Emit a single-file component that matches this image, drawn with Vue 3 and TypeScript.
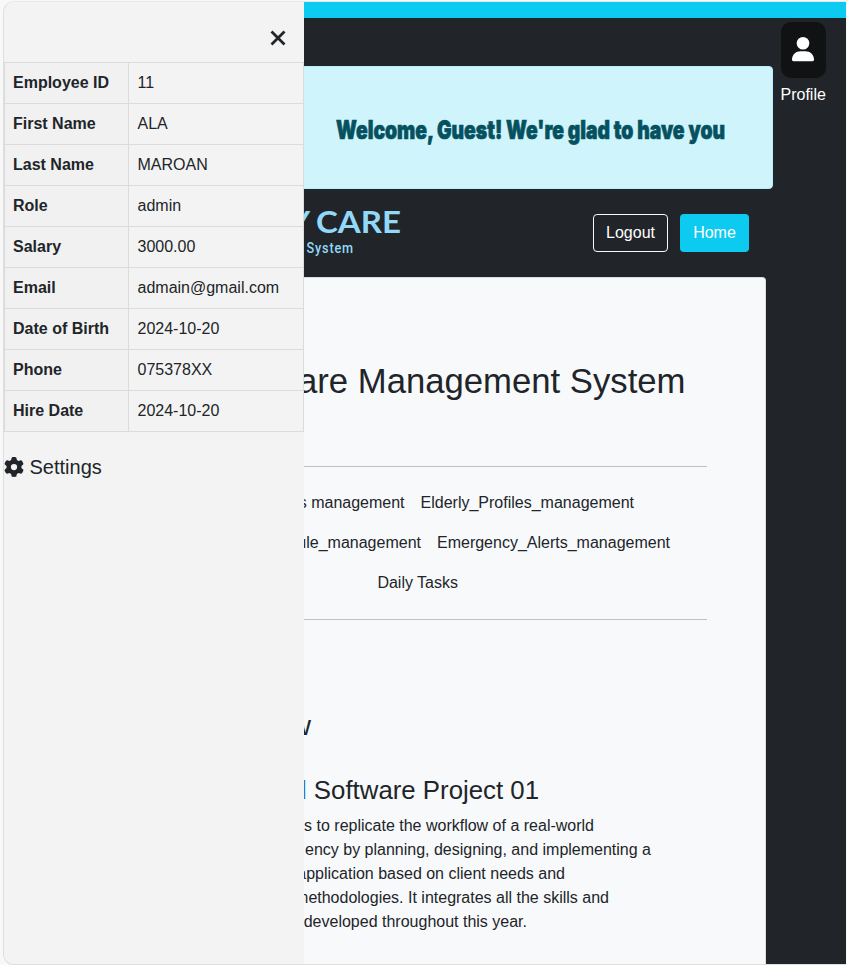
<script setup lang="ts">
interface Field {
  label: string
  value: string
}

const fields: Field[] = [
  { label: 'Employee ID', value: '11' },
  { label: 'First Name', value: 'ALA' },
  { label: 'Last Name', value: 'MAROAN' },
  { label: 'Role', value: 'admin' },
  { label: 'Salary', value: '3000.00' },
  { label: 'Email', value: 'admain@gmail.com' },
  { label: 'Date of Birth', value: '2024-10-20' },
  { label: 'Phone', value: '075378XX' },
  { label: 'Hire Date', value: '2024-10-20' },
]

const summary: string[] = [
  's to replicate the workflow of a real-world',
  'ency by planning, designing, and implementing a',
  'application based on client needs and',
  'methodologies. It integrates all the skills and',
  'developed throughout this year.',
]
</script>

<template>
  <div class="window">
    <div class="frame">
      <main class="page">
        <div class="strip"></div>
        <section class="top">
          <div class="banner">
            <svg class="welcome" width="400" height="40" viewBox="0 0 400 40">
              <text x="5" y="31" textLength="389" lengthAdjust="spacingAndGlyphs">Welcome, Guest! We're glad to have you</text>
            </svg>
          </div>
          <div class="profile">
            <div class="avatar">
              <svg width="22" height="25" viewBox="0 0 22 25">
                <circle cx="11" cy="6.3" r="6.3" />
                <path d="M0 22.6C0 17.5 4 14.2 8.600 14.200h4.800C18 14.200 22 17.500 22 22.600c0 1-.6 1.700-1.500 1.700h-19C.6 24.300 0 23.600 0 22.600z" />
              </svg>
            </div>
            <span>Profile</span>
          </div>
        </section>
        <nav class="nav">
          <svg class="logo" width="110" height="60" viewBox="0 0 110 60">
            <text class="brand" x="6" y="32" text-anchor="end">Y</text>
            <text class="brand" x="12" y="32" textLength="85" lengthAdjust="spacingAndGlyphs">CARE</text>
            <text class="tag" transform="translate(2.500 51.500) scale(.82 1)">System</text>
          </svg>
          <button class="btn outline">Logout</button>
          <button class="btn solid">Home</button>
        </nav>
        <article class="card">
          <h1>Care Management System</h1>
          <div class="links">
            <div class="row first"><a>Tasks management</a><a>Elderly_Profiles_management</a></div>
            <div class="row second"><a>Schedule_management</a><a>Emergency_Alerts_management</a></div>
            <div class="row third"><a>Daily Tasks</a></div>
          </div>
          <h2>Overview</h2>
          <h3><span class="accent">Final</span> Software Project 01</h3>
          <div class="summary">
            <div v-for="line in summary" :key="line" class="line">{{ line }}</div>
          </div>
        </article>
      </main>
      <aside class="drawer">
        <div class="close">
          <svg width="16" height="16" viewBox="0 0 16 16"><path d="M1.500 1.500l13 13M14.500 1.500l-13 13" /></svg>
        </div>
        <table>
          <tbody>
            <tr v-for="f in fields" :key="f.label">
              <th>{{ f.label }}</th>
              <td>{{ f.value }}</td>
            </tr>
          </tbody>
        </table>
        <div class="settings">
          <svg width="20" height="20" viewBox="0 0 512 512">
            <path d="M495.900 166.600c3.200 8.700 .5 18.400-6.400 24.600l-43.300 39.400c1.100 8.300 1.700 16.800 1.700 25.400s-.6 17.100-1.700 25.400l43.300 39.400c6.900 6.200 9.600 15.900 6.400 24.600c-4.400 11.900-9.700 23.300-15.800 34.300l-4.700 8.100c-6.600 11-14 21.400-22.100 31.200c-5.900 7.200-15.700 9.600-24.500 6.800l-55.700-17.700c-13.400 10.300-28.200 18.900-44 25.400l-12.500 57.100c-2 9.100-9 16.300-18.200 17.800c-13.800 2.300-28 3.500-42.500 3.500s-28.700-1.200-42.500-3.500c-9.200-1.500-16.200-8.700-18.200-17.800l-12.500-57.100c-15.800-6.500-30.600-15.100-44-25.400L83.100 425.900c-8.800 2.800-18.600 .3-24.500-6.800c-8.100-9.800-15.500-20.200-22.100-31.200l-4.700-8.100c-6.100-11-11.400-22.400-15.800-34.300c-3.200-8.700-.5-18.400 6.400-24.600l43.300-39.400C64.600 273.100 64 264.600 64 256s.6-17.100 1.700-25.400L22.400 191.200c-6.900-6.200-9.600-15.900-6.400-24.600c4.400-11.900 9.700-23.300 15.800-34.300l4.700-8.100c6.600-11 14-21.400 22.100-31.200c5.900-7.200 15.700-9.600 24.500-6.800l55.700 17.700c13.400-10.300 28.200-18.900 44-25.400l12.500-57.100c2-9.100 9-16.300 18.200-17.800C227.300 1.200 241.500 0 256 0s28.700 1.200 42.500 3.500c9.200 1.500 16.200 8.700 18.200 17.800l12.500 57.100c15.800 6.500 30.600 15.100 44 25.400l55.700-17.700c8.800-2.800 18.600-.3 24.500 6.800c8.100 9.800 15.500 20.200 22.100 31.200l4.700 8.100c6.100 11 11.400 22.400 15.800 34.300zM256 336a80 80 0 1 0 0-160 80 80 0 1 0 0 160z" />
          </svg>
          <span>Settings</span>
        </div>
      </aside>
    </div>
  </div>
</template>

<style>
body {
  background: #f8f8f8;
  overflow: hidden;
}
</style>

<style scoped>
* {
  box-sizing: border-box;
}
.window {
  width: 847px;
  height: 965px;
  padding: 1px 1px 0 3px;
  background: #f8f8f8;
  font: 16px/24px "Liberation Sans", Arial, sans-serif;
  color: #212529;
}
.frame {
  position: relative;
  height: 964px;
  border: 1px solid #dedede;
  border-top-color: #e8e8e8;
  border-right: 0;
  border-radius: 11px 0 0 11px;
  overflow: hidden;
}
.page {
  height: 962px;
  margin-left: 20px;
  background: #212529;
  overflow: hidden;
}
.strip {
  height: 16px;
  background: #0dcaf0;
}
.top {
  display: flex;
  height: 171px;
  padding: 4px 0 0 264px;
  gap: 8px;
}
.banner {
  width: 485px;
  height: 123px;
  margin-top: 44px;
  display: flex;
  align-items: center;
  justify-content: center;
  background: #cff4fc;
  border: 1px solid #b6effb;
  border-radius: 4px;
}
.welcome {
  overflow: visible;
}
.welcome text {
  font: 900 25.5px Inter, "Open Sans", sans-serif;
  fill: #055160;
  stroke: #055160;
  stroke-width: 0.7px;
}
.profile {
  display: flex;
  flex-direction: column;
  gap: 5px;
  color: #fff;
}
.profile span {
  margin-left: -0.5px;
}
.avatar {
  width: 45px;
  height: 56px;
  display: flex;
  align-items: center;
  justify-content: center;
  padding: 0 1px 2px 0;
  border-radius: 10px;
  background: #111213;
}
.avatar svg {
  fill: #fff;
}
.nav {
  height: 88px;
  display: flex;
  align-items: center;
  padding-left: 280px;
}
.logo {
  margin: -4px 179px 0 0;
  overflow: visible;
}
.brand {
  font: 700 31px Lato, sans-serif;
  fill: #92d8f8;
}
.tag {
  font: 500 15.5px Roboto, sans-serif;
  letter-spacing: 1px;
  fill: #92d8f8;
}
.btn {
  height: 38px;
  padding: 0;
  border-radius: 4px;
  color: #fff;
  font: inherit;
}
.outline {
  width: 75px;
  margin-right: 12px;
  border: 1px solid #f8f9fa;
  background: transparent;
}
.solid {
  width: 69px;
  border: 0;
  background: #0dcaf0;
}
.card {
  width: 697px;
  height: 687px;
  margin-left: 45px;
  padding: 75px 58px 0 58px;
  background: #f8f9fb;
  border: 1px solid #dcdddf;
  border-bottom: 0;
  border-radius: 4px 4px 0 0;
}
h1,
h2,
h3 {
  margin: 0;
  font-weight: 400;
  text-align: right;
  white-space: nowrap;
}
h1 {
  height: 113px;
  padding-right: 21.5px;
  font-size: 34.7px;
  line-height: 56px;
}
.links {
  height: 154px;
  padding-top: 24px;
  border-top: 1px solid #c0c2c5;
  border-bottom: 1px solid #c0c2c5;
}
.row {
  height: 40px;
  display: flex;
  justify-content: flex-end;
  gap: 16px;
}
.first {
  padding-right: 73px;
}
.second {
  padding-right: 37px;
}
.third {
  padding-right: 249px;
}
h2 {
  margin-top: 88px;
  padding-right: 396px;
  font-size: 28px;
  line-height: 36px;
}
h3 {
  margin-top: 30px;
  padding-right: 168px;
  font-size: 25.8px;
  line-height: 32px;
}
.accent {
  color: #2878c4;
}
.summary {
  margin-top: 8px;
  text-align: right;
  white-space: nowrap;
}
.line {
  padding-right: 113px;
}
.line:nth-child(2) {
  padding-right: 56px;
}
.line:nth-child(3) {
  padding-right: 142px;
}
.line:nth-child(4) {
  padding-right: 98px;
}
.line:nth-child(5) {
  padding-right: 180px;
}
.drawer {
  position: absolute;
  top: 0;
  left: 0;
  width: 300px;
  height: 962px;
  background: #f3f3f3;
}
.close {
  display: flex;
  justify-content: flex-end;
  height: 60px;
  padding: 28px 18px 0 0;
}
.close path {
  fill: none;
  stroke: #212529;
  stroke-width: 2.8;
}
table {
  width: 300px;
  table-layout: fixed;
  border-collapse: collapse;
}
tr {
  height: 41px;
}
th,
td {
  padding: 8px;
  border: 1px solid #dcdcdd;
  text-align: left;
}
td {
  padding-left: 8.5px;
}
th {
  width: 124px;
  background: #f1f1f1;
}
.settings {
  display: flex;
  align-items: center;
  gap: 5.5px;
  margin-top: 20px;
  font-size: 20px;
  line-height: 30px;
}
.settings svg {
  fill: #212529;
}
</style>
